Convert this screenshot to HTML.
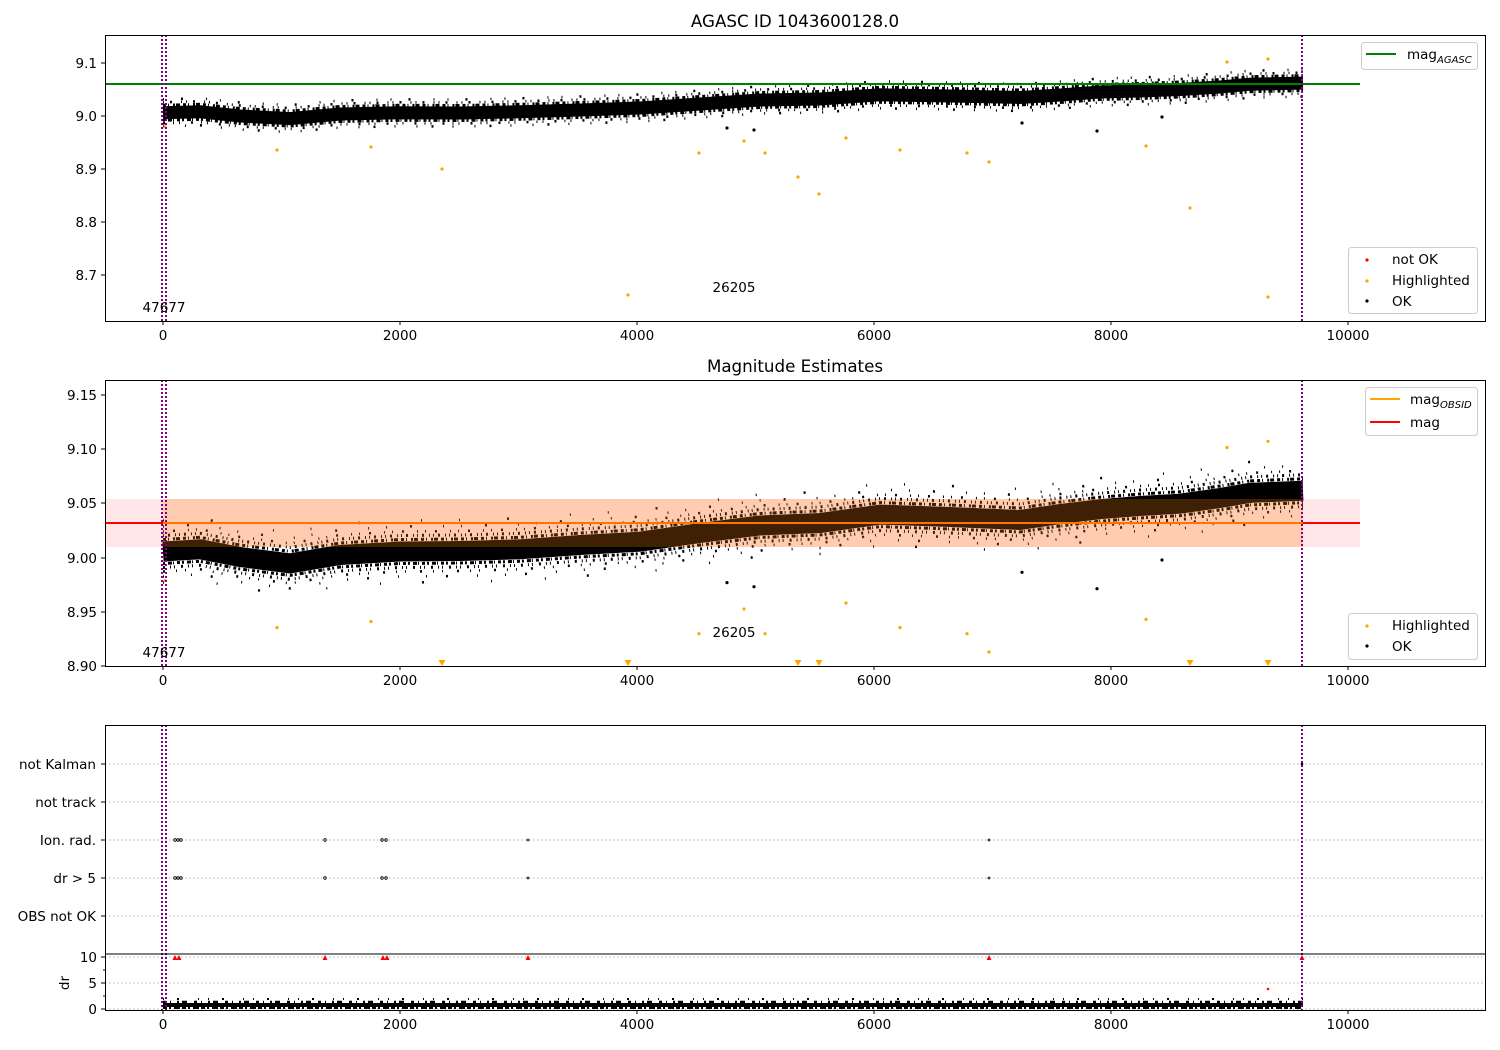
<!DOCTYPE html>
<html><head><meta charset="utf-8"><style>
html,body{margin:0;padding:0;background:#fff;}
svg{display:block;font-family:"DejaVu Sans","Liberation Sans",sans-serif;}
</style></head><body>
<svg width="1500" height="1050" viewBox="0 0 1500 1050" xmlns="http://www.w3.org/2000/svg">
<defs>
<polyline id="c1" points="163,112.8 200,111.8 240,116 290,118.6 340,114 400,112.8 460,113 520,111.8 580,110 640,108 700,104 760,100 820,99 880,94.8 950,96 1020,97.5 1060,95 1100,92 1140,91 1180,89.5 1220,87 1250,84.2 1303,83.1" fill="none"/>
<polyline id="c2" points="163,551.5 200,549.3 240,557 290,563.4 340,555 400,551.5 460,551 520,549.3 580,545 640,541.7 700,533 760,525.5 820,523 880,514.6 950,517 1020,520 1060,514 1100,509.2 1140,506 1180,503.7 1220,498 1250,492.9 1303,490.7" fill="none"/>
</defs>
<rect width="1500" height="1050" fill="#fff"/>
<text x="795" y="27" text-anchor="middle" font-size="16.7">AGASC ID 1043600128.0</text>
<text x="795" y="372" text-anchor="middle" font-size="16.7">Magnitude Estimates</text>

<!-- panel 1 data -->
<g stroke="#000">
<use href="#c1" stroke-width="13"/>
<use href="#c1" stroke-width="3" stroke-dasharray="3,2,1,4,2,1,4,3" transform="translate(0,-7.5)"/>
<use href="#c1" stroke-width="3" stroke-dasharray="2,3,4,1,1,3,3,2" transform="translate(0,7.5)"/>
<use href="#c1" stroke-width="2.5" stroke-dasharray="1,6,2,9,1,4" transform="translate(0,-10.5)"/>
<use href="#c1" stroke-width="2.5" stroke-dasharray="2,8,1,5,1,11" transform="translate(0,10.5)"/>
<use href="#c1" stroke-width="2.5" stroke-dasharray="1,17,2,23,1,13" transform="translate(0,-13.5)"/>
<use href="#c1" stroke-width="2.5" stroke-dasharray="1,21,1,14,2,19" transform="translate(0,13.5)"/>
</g>
<g fill="#000">
<circle cx="727" cy="128" r="1.6"/><circle cx="754" cy="130" r="1.6"/><circle cx="1097" cy="131" r="1.6"/><circle cx="1022" cy="123" r="1.6"/><circle cx="1162" cy="117" r="1.6"/>
</g>
<g fill="#ffa500">
<circle cx="165" cy="127" r="1.6"/><circle cx="277" cy="150" r="1.6"/><circle cx="371" cy="147" r="1.6"/><circle cx="442" cy="169" r="1.6"/><circle cx="628" cy="295" r="1.6"/><circle cx="699" cy="153" r="1.6"/><circle cx="744" cy="141" r="1.6"/><circle cx="765" cy="153" r="1.6"/><circle cx="798" cy="177" r="1.6"/><circle cx="819" cy="194" r="1.6"/><circle cx="846" cy="138" r="1.6"/><circle cx="900" cy="150" r="1.6"/><circle cx="967" cy="153" r="1.6"/><circle cx="989" cy="162" r="1.6"/><circle cx="1146" cy="146" r="1.6"/><circle cx="1190" cy="208" r="1.6"/><circle cx="1227" cy="62" r="1.6"/><circle cx="1268" cy="59" r="1.6"/><circle cx="1268" cy="297" r="1.6"/>
</g>
<line x1="105" y1="84" x2="1360" y2="84" stroke="#008000" stroke-width="2"/>

<!-- panel 2 -->
<rect x="105" y="499" width="1255" height="48" fill="#ffb6c1" opacity="0.35"/>
<g stroke="#000">
<use href="#c2" stroke-width="20"/>
<use href="#c2" stroke-width="3" stroke-dasharray="3,2,1,4,2,1,4,3" transform="translate(0,-12)"/>
<use href="#c2" stroke-width="3" stroke-dasharray="2,3,4,1,1,3,3,2" transform="translate(0,12)"/>
<use href="#c2" stroke-width="3" stroke-dasharray="1,4,2,5,1,3" transform="translate(0,-16)"/>
<use href="#c2" stroke-width="3" stroke-dasharray="2,5,1,3,1,6" transform="translate(0,16)"/>
<use href="#c2" stroke-width="2.5" stroke-dasharray="1,9,2,13,1,7" transform="translate(0,-20)"/>
<use href="#c2" stroke-width="2.5" stroke-dasharray="2,11,1,8,1,14" transform="translate(0,20)"/>
<use href="#c2" stroke-width="2.5" stroke-dasharray="1,23,2,31,1,17" transform="translate(0,-25)"/>
<use href="#c2" stroke-width="2.5" stroke-dasharray="1,27,1,19,2,29" transform="translate(0,25)"/>
<use href="#c2" stroke-width="2.5" stroke-dasharray="1,47,2,61,1,37" transform="translate(0,-31)"/>
<use href="#c2" stroke-width="2.5" stroke-dasharray="1,53,1,41,2,67" transform="translate(0,31)"/>
</g>
<g fill="#000">
<circle cx="727" cy="582.6" r="1.6"/><circle cx="754" cy="586.7" r="1.6"/><circle cx="1097" cy="588.7" r="1.6"/><circle cx="1022" cy="572.3" r="1.6"/><circle cx="1162" cy="560" r="1.6"/>
</g>
<rect x="163" y="499" width="1140" height="48" fill="#ff7f0e" opacity="0.25"/>
<line x1="105" y1="523" x2="1360" y2="523" stroke="#f00" stroke-width="2"/>
<line x1="163" y1="523" x2="1303" y2="523" stroke="#ffa500" stroke-width="2" opacity="0.7"/>
<g fill="#ffa500">
<circle cx="165" cy="580.5" r="1.6"/><circle cx="277" cy="627.6" r="1.6"/><circle cx="371" cy="621.5" r="1.6"/><circle cx="699" cy="633.7" r="1.6"/><circle cx="744" cy="609" r="1.6"/><circle cx="765" cy="633.7" r="1.6"/><circle cx="846" cy="603" r="1.6"/><circle cx="900" cy="627.6" r="1.6"/><circle cx="967" cy="633.7" r="1.6"/><circle cx="989" cy="652" r="1.6"/><circle cx="1146" cy="619.4" r="1.6"/><circle cx="1227" cy="447.5" r="1.6"/><circle cx="1268" cy="441.3" r="1.6"/>
<path d="M438.5,660h7l-3.5,6z M624.5,660h7l-3.5,6z M794.5,660h7l-3.5,6z M815.5,660h7l-3.5,6z M1186.5,660h7l-3.5,6z M1264.5,660h7l-3.5,6z"/>
</g>

<!-- panel 3 grid -->
<g stroke="#b0b0b0" stroke-dasharray="1.5,2.5" stroke-width="1">
<line x1="105" y1="764" x2="1485" y2="764"/><line x1="105" y1="802" x2="1485" y2="802"/>
<line x1="105" y1="840" x2="1485" y2="840"/><line x1="105" y1="878" x2="1485" y2="878"/>
<line x1="105" y1="916" x2="1485" y2="916"/>
<line x1="105" y1="957" x2="1485" y2="957"/><line x1="105" y1="983" x2="1485" y2="983"/><line x1="105" y1="1009" x2="1485" y2="1009"/>
</g>
<g stroke="#000">
<line x1="163" y1="1005" x2="1303" y2="1005" stroke-width="4"/>
<line x1="163" y1="1002" x2="1303" y2="1002" stroke-width="2.5" stroke-dasharray="3,4,1,6,2,3,5,7"/>
<line x1="163" y1="1008" x2="1303" y2="1008" stroke-width="2" stroke-dasharray="4,2,2,3,6,2"/>
<line x1="163" y1="999" x2="1303" y2="999" stroke-width="2" stroke-dasharray="1,13,2,19,1,9"/>
</g>
<g fill="none" stroke="#000" stroke-width="0.8">
<circle cx="175" cy="840" r="1.3"/><circle cx="178" cy="840" r="1.3"/><circle cx="181" cy="840" r="1.3"/><circle cx="325" cy="840" r="1.3"/><circle cx="382" cy="840" r="1.3"/><circle cx="386" cy="840" r="1.3"/><circle cx="528" cy="840" r="1"/><circle cx="989" cy="840" r="1"/>
<circle cx="175" cy="878" r="1.3"/><circle cx="178" cy="878" r="1.3"/><circle cx="181" cy="878" r="1.3"/><circle cx="325" cy="878" r="1.3"/><circle cx="382" cy="878" r="1.3"/><circle cx="386" cy="878" r="1.3"/><circle cx="528" cy="878" r="1"/><circle cx="989" cy="878" r="1"/>
</g>
<circle cx="1302" cy="764" r="1.3" fill="#000"/>
<g fill="#f00">
<path d="M172.5,960h5l-2.5,-5z M176.5,960h5l-2.5,-5z M322.5,960h5l-2.5,-5z M380.5,960h5l-2.5,-5z M384.5,960h5l-2.5,-5z M525.5,960h5l-2.5,-5z M986.5,960h5l-2.5,-5z M1299.5,960h5l-2.5,-5z"/>
<circle cx="1268" cy="989" r="1.3"/>
</g>

<!-- vertical dotted lines -->
<g stroke="#800080" stroke-width="2" stroke-dasharray="2,2">
<line x1="162" y1="35" x2="162" y2="321"/><line x1="166" y1="35" x2="166" y2="321"/><line x1="1302" y1="35" x2="1302" y2="321"/>
<line x1="162" y1="380" x2="162" y2="666"/><line x1="166" y1="380" x2="166" y2="666"/><line x1="1302" y1="380" x2="1302" y2="666"/>
<line x1="162" y1="725" x2="162" y2="1010"/><line x1="166" y1="725" x2="166" y2="1010"/><line x1="1302" y1="725" x2="1302" y2="1010"/>
</g>
<!-- frames -->
<g fill="none" stroke="#000" stroke-width="1">
<rect x="105.5" y="35.5" width="1380" height="286"/>
<rect x="105.5" y="380.5" width="1380" height="286"/>
<rect x="105.5" y="725.5" width="1380" height="285"/>
<line x1="105" y1="954" x2="1485" y2="954"/>
</g>
<!-- ticks -->
<g stroke="#000" stroke-width="1">
<path d="M163,321v4M400,321v4M637,321v4M874,321v4M1111,321v4M1348,321v4
M163,666v4M400,666v4M637,666v4M874,666v4M1111,666v4M1348,666v4
M163,1010v4M400,1010v4M637,1010v4M874,1010v4M1111,1010v4M1348,1010v4
M101,63h4M101,116h4M101,169h4M101,222h4M101,275h4
M101,395h4M101,449h4M101,503h4M101,558h4M101,612h4M101,666h4
M101,764h4M101,802h4M101,840h4M101,878h4M101,916h4
M101,957h4M101,983h4M101,1009h4M103,970h2M103,996h2"/>
</g>
<g font-size="13.5" text-anchor="middle">
<text x="163" y="340">0</text><text x="400" y="340">2000</text><text x="637" y="340">4000</text><text x="874" y="340">6000</text><text x="1111" y="340">8000</text><text x="1348" y="340">10000</text>
<text x="163" y="685">0</text><text x="400" y="685">2000</text><text x="637" y="685">4000</text><text x="874" y="685">6000</text><text x="1111" y="685">8000</text><text x="1348" y="685">10000</text>
<text x="163" y="1029">0</text><text x="400" y="1029">2000</text><text x="637" y="1029">4000</text><text x="874" y="1029">6000</text><text x="1111" y="1029">8000</text><text x="1348" y="1029">10000</text>
</g>
<g font-size="13.5" text-anchor="end">
<text x="97" y="68">9.1</text><text x="97" y="121">9.0</text><text x="97" y="174">8.9</text><text x="97" y="227">8.8</text><text x="97" y="280">8.7</text>
<text x="97" y="400">9.15</text><text x="97" y="454">9.10</text><text x="97" y="508">9.05</text><text x="97" y="563">9.00</text><text x="97" y="617">8.95</text><text x="97" y="671">8.90</text>
<text x="96" y="769">not Kalman</text><text x="96" y="807">not track</text><text x="96" y="845">Ion. rad.</text><text x="96" y="883">dr &gt; 5</text><text x="96" y="921">OBS not OK</text>
<text x="97" y="962">10</text><text x="97" y="988">5</text><text x="97" y="1014">0</text>
</g>
<g font-size="13.5">
<text x="164" y="312" text-anchor="middle">47677</text><text x="734" y="292" text-anchor="middle">26205</text>
<text x="164" y="657" text-anchor="middle">47677</text><text x="734" y="637" text-anchor="middle">26205</text>
<text x="0" y="0" text-anchor="middle" transform="translate(69,983) rotate(-90)">dr</text>
</g>
<!-- legends -->
<g font-size="13.5">
<rect x="1361.5" y="42.5" width="116" height="27" rx="3" fill="#fff" stroke="#ccc"/>
<line x1="1366" y1="54" x2="1396" y2="54" stroke="#008000" stroke-width="2"/>
<text x="1407" y="59">mag<tspan font-size="10" font-style="italic" dy="4">AGASC</tspan></text>
<rect x="1348.5" y="247.5" width="129" height="66" rx="3" fill="#fff" stroke="#ccc"/>
<circle cx="1367" cy="260" r="1.6" fill="#f00"/><text x="1392" y="264">not OK</text>
<circle cx="1367" cy="281" r="1.6" fill="#ffa500"/><text x="1392" y="285">Highlighted</text>
<circle cx="1367" cy="301" r="1.6" fill="#000"/><text x="1392" y="306">OK</text>
<rect x="1365.5" y="387.5" width="112" height="48" rx="3" fill="#fff" stroke="#ccc"/>
<line x1="1370" y1="399" x2="1400" y2="399" stroke="#ffa500" stroke-width="2"/>
<text x="1410" y="404">mag<tspan font-size="10" font-style="italic" dy="4">OBSID</tspan></text>
<line x1="1370" y1="422" x2="1400" y2="422" stroke="#f00" stroke-width="2"/>
<text x="1410" y="427">mag</text>
<rect x="1348.5" y="613.5" width="129" height="46" rx="3" fill="#fff" stroke="#ccc"/>
<circle cx="1367" cy="626" r="1.6" fill="#ffa500"/><text x="1392" y="630">Highlighted</text>
<circle cx="1367" cy="646" r="1.6" fill="#000"/><text x="1392" y="651">OK</text>
</g>
</svg>
</body></html>
